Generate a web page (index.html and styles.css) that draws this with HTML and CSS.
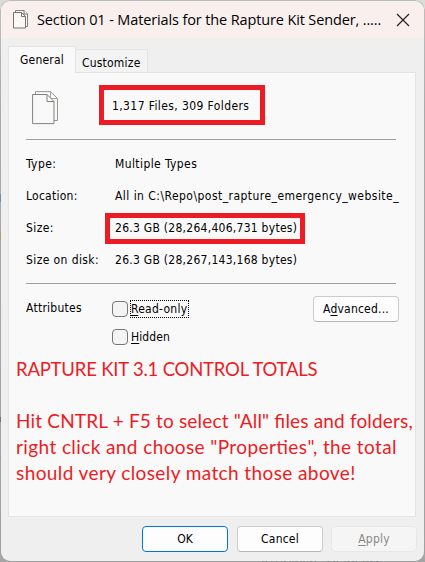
FILE: index.html
```html
<!DOCTYPE html>
<html lang="en">
<head>
<meta charset="utf-8">
<title>Properties</title>
<link rel="stylesheet" href="styles.css">
</head>
<body>
<div class="desktop">
<div class="window">
  <header class="titlebar">
    <svg class="title-icon" width="15" height="19" viewBox="0 0 15 19"><path d="M2.5 2V.5H11L14.5 4V16.5H12.5" fill="#fbf7f5" stroke="#85817e"/><path d="M.5 2.5H8.5L12.5 6.5V18H.5ZM8.5 2.5V6.5H12.5M11 .5V4H14.5" fill="#fbf7f5" stroke="#777370"/></svg>
    <h1 class="title">Section 01 - Materials for the Rapture Kit Sender, .....</h1>
    <svg class="close" width="14" height="14" viewBox="0 0 14 14"><path d="M1 1L13 13M13 1L1 13" stroke="#222" stroke-width="1.2"/></svg>
  </header>
  <nav class="tabs"><span class="tab active"><span class="t-general">General</span></span><span class="tab"><span class="t-custom">Customize</span></span></nav>
  <main class="panel">
    <section class="summary">
      <svg class="files" width="27" height="34" viewBox="0 0 27 34"><path d="M3.5 3.5V.6H18.5L25.5 7.5V29.5H22" fill="#f9f9f9" stroke="#999692"/><path d="M18.5 .6V7.5H25.5" fill="none" stroke="#aaa7a3"/><path d="M.6 3.5H15L22 10.5V32.6H.6Z" fill="#f9f9f9" stroke="#85817e"/><path d="M15 3.5V10.5H22" fill="none" stroke="#85817e"/></svg>
      <div class="redbox count"><span class="t-count">1,317 Files, 309 Folders</span></div>
    </section>
    <hr>
    <dl class="details">
      <dt class="t-type">Type:</dt><dd><span class="t-multiple">Multiple Types</span></dd>
      <dt class="t-location">Location:</dt><dd><span class="t-path">All in C:\Repo\post_rapture_emergency_website_</span></dd>
      <dt class="t-size">Size:</dt><dd><span class="redbox size"><span class="t-bytes">26.3 GB (28,264,406,731 bytes)</span></span></dd>
      <dt class="t-disk">Size on disk:</dt><dd><span class="t-bytes">26.3 GB (28,267,143,168 bytes)</span></dd>
    </dl>
    <hr>
    <section class="attributes">
      <span class="attr-label">Attributes</span>
      <div class="checks">
        <label><i class="box"></i><span class="focus"><u>R</u>ead-only</span></label>
        <label><i class="box"></i><span class="hidden"><u>H</u>idden</span></label>
      </div>
      <button class="btn advanced"><span>A<u>d</u>vanced...</span></button>
    </section>
    <section class="note">
      <p class="n1">RAPTURE KIT 3.1 CONTROL TOTALS</p>
      <p class="n2">Hit CNTRL + F5 to select "All" files and folders,</p>
      <p class="n3">right click and choose "Properties", the total</p>
      <p class="n4">should very closely match those above!</p>
    </section>
  </main>
  <footer class="actions"><button class="btn ok"><span>OK</span></button><button class="btn cancel"><span>Cancel</span></button><button class="btn apply" disabled><span><u>A</u>pply</span></button></footer>
</div>
<div class="behind" aria-hidden="true">9/12/2025 10:29 PM</div>
</div>
</body>
</html>
```

FILE: styles.css
```css
* { box-sizing: border-box; }
body { margin: 0; font: 12px/16px "DejaVu Sans Condensed", "DejaVu Sans", sans-serif; font-stretch: condensed; color: #000; }
.desktop {
  position: relative; width: 425px; height: 562px; padding: 1px; overflow: hidden;
  background:
    linear-gradient(#4a7fb5, #4a7fb5) 0 194px / 1px 8px no-repeat,
    linear-gradient(#c49a50, #c49a50) 0 232px / 1px 7px no-repeat,
    linear-gradient(#503c70, #503c70) 0 417px / 1px 5px no-repeat,
    linear-gradient(#c49a50, #c49a50) 0 456px / 1px 3px no-repeat,
    linear-gradient(#d9dcda 0 20px, #b8b8b8 110px, #a5a5a5);
}
.window { position: relative; z-index: 1; width: 423px; height: 560px; background: #efefef; border-radius: 9px; overflow: hidden; display: flex; flex-direction: column; box-shadow: 0 0 0 .5px #9c9c9c; }
.titlebar { flex: none; height: 37px; padding: 0 14px 0 12px; background: #f9f0ee; display: flex; align-items: center; justify-content: space-between; }
.title { margin: 0 0 0 9px; flex: 1; font: 14.5px/20px "Open Sans", sans-serif; letter-spacing: -.13px; white-space: nowrap; position: relative; top: 0; }
.close { flex: none; }
.tabs { flex: none; display: flex; align-items: flex-end; height: 34px; padding-left: 7px; }
.tab { height: 23px; width: 72px; border: 1px solid #e3e3e3; border-left: 0; border-bottom: 0; background: #f3f3f3; padding: 5px 0 0 6px; }
.tab.active { position: relative; z-index: 1; width: 68px; height: 27px; margin-bottom: -1px; border-left: 1px solid #e3e3e3; background: #f9f9f9; padding: 5px 0 0 11px; }
.t-general { letter-spacing: .2px; }
.t-custom { letter-spacing: .2px; }
.t-count { letter-spacing: .4px; }
.t-bytes { letter-spacing: .27px; }
.t-path { letter-spacing: .46px; }
.t-multiple { letter-spacing: .4px; }
.t-type, .t-size, .t-disk { letter-spacing: .4px; }
.t-location { letter-spacing: .25px; }
.panel { flex: none; width: 408px; height: 445px; margin-left: 7px; border: 1px solid #e3e3e3; background: #f9f9f9; padding-left: 7px; }
.summary { height: 66px; display: flex; padding: 12px 0 0 16px; }
.files { margin-top: 6px; flex: none; }
.redbox { border: 5px solid #ed1c24; }
.count { width: 166px; height: 40px; margin-left: 40px; padding: 8px 0 0 8px; }
span { white-space: nowrap; }
hr { width: 370px; margin: 0 0 0 10px; border: 0; height: 1px; background: #a0a0a0; }
.details { margin: 8px 0 0 10px; height: 135px; display: grid; grid-template-columns: 89px 1fr; grid-auto-rows: 32px; align-items: center; }
dd { margin: 0; }
.size { display: flex; align-items: center; width: 200px; height: 31px; margin-left: -10px; padding-left: 5px; }
.attributes { display: flex; height: 72px; padding: 0 0 0 10px; }
.attr-label { width: 86px; padding-top: 16px; letter-spacing: .25px; }
.checks { display: grid; width: 201px; height: 68px; grid-template-rows: 28px 28px; padding-top: 11px; }
.checks label { display: flex; align-items: center; }
.box { width: 16px; height: 16px; border: 1px solid #777; border-radius: 4px; background: #f4f4f4; }
.focus { margin-left: 2px; width: 59px; height: 18px; border: 1px dotted #000; line-height: 16px; letter-spacing: .25px; }
.hidden { margin-left: 3px; letter-spacing: .1px; }
u { text-underline-offset: 2px; }
.btn { width: 86px; height: 26px; flex: none; padding: 0; border: 1px solid #ccc; border-bottom-color: #b8b8b8; border-radius: 4px; background: #fdfdfd; color: #000; font: inherit; letter-spacing: .2px; }
.advanced { margin-top: 12px; }
.note { color: #ed1c24; font: 19px/26px Lato, sans-serif; font-feature-settings: "liga" 1; }
.note p { margin: 0; white-space: nowrap; width: max-content; }
.note .n1 { margin-bottom: 26px; font-size: 18.5px; letter-spacing: -.2px; }
.n2 { letter-spacing: .17px; }
.n3, .n4 { letter-spacing: .4px; }
.actions { display: flex; gap: 9px; padding: 9px 0 0 141px; }
.ok { border-color: #0078d4; letter-spacing: 0; }
.apply { margin-left: -1px; border-color: #e7e7e7; background: #f5f5f5; color: #888; }
.behind { position: absolute; left: 261px; top: 557px; color: #555; font-size: 13px; white-space: nowrap; }
```
